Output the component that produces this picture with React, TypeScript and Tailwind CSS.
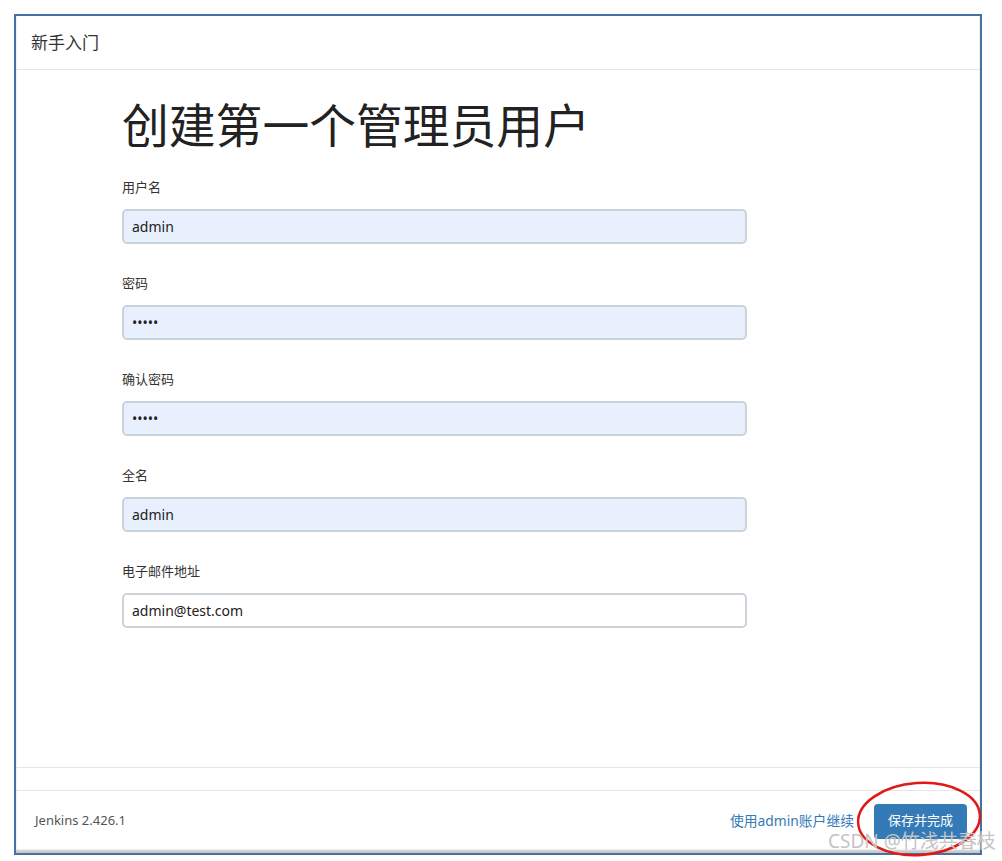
import React from "react";

const font = { fontFamily: '"Noto Sans", "Noto Sans CJK SC", sans-serif' };

function Field({ label, value, filled = true }: { label: string; value: string; filled?: boolean }) {
  return (
    <div className="flex flex-col">
      <label className="text-[13px] leading-[18px] text-[#333]">{label}</label>
      <div
        className={`mt-[13px] h-[35px] w-[625px] rounded-[5px] border-2 border-[#cbd2da] flex items-center pl-[8px] text-[14px] text-[#222] ${
          filled ? "bg-[#e8f0fe]" : "bg-white"
        }`}
      >
        {value}
      </div>
    </div>
  );
}

export default function App() {
  return (
    <div className="relative w-[1002px] h-[861px] bg-white overflow-hidden" style={font}>
      <div className="pt-[14px] pl-[14px]">
        <div className="w-[968px] h-[841px] border-2 border-[#4572a6] bg-white flex flex-col shadow-[inset_0_-3px_2px_rgba(0,0,0,0.22)]">
          <div className="h-[54px] border-b border-[#e5e5e5] flex items-center pl-[15px] text-[17px] text-[#333]">
            新手入门
          </div>
          <div className="flex-1 pl-[106px] pt-[29px]">
            <h1 className="text-[46.8px] leading-[52px] text-[#222] font-normal">创建第一个管理员用户</h1>
            <div className="mt-[27px] flex flex-col gap-[30px]">
              <Field label="用户名" value="admin" />
              <Field label="密码" value="•••••" />
              <Field label="确认密码" value="•••••" />
              <Field label="全名" value="admin" />
              <Field label="电子邮件地址" value="admin@test.com" filled={false} />
            </div>
          </div>
          <div className="h-[24px] border-t border-b border-[#e5e5e5]" />
          <div className="h-[62px] flex items-center justify-between pl-[19px] pr-[13px] pb-[2px]">
            <span className="text-[13px] text-[#555]">Jenkins 2.426.1</span>
            <div className="flex items-center gap-[20px]">
              <span className="text-[13.8px] text-[#337ab7]">使用admin账户继续</span>
              <button className="h-[35px] w-[93px] rounded-[4px] bg-[#337ab7] text-white text-[13px]">保存并完成</button>
            </div>
          </div>
        </div>
      </div>
      <svg className="absolute left-[853px] top-[780px]" width="132" height="80" viewBox="0 0 132 80">
        <ellipse cx="66" cy="39" rx="61" ry="36" fill="none" stroke="#e01818" strokeWidth="2.5" transform="rotate(-4 66 39)" />
      </svg>
      <div className="absolute left-[828px] top-[829px] text-[19px] leading-[24px] text-[#c4c4c4] whitespace-nowrap">
        CSDN @竹浅共春枝
      </div>
    </div>
  );
}
